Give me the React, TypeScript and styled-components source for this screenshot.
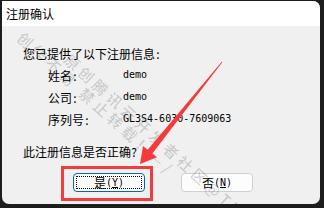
import React from "react";
import styled, { createGlobalStyle } from "styled-components";

const GlobalStyle = createGlobalStyle`
  html, body {
    margin: 0;
    padding: 0;
    background: #1d1d1d;
  }
  body {
    font-family: "Noto Sans CJK SC", "Noto Sans", sans-serif;
    color: #000;
  }
`;

const Page = styled.div`
  width: 324px;
  height: 208px;
  box-sizing: border-box;
  padding: 1px 4px 4px 2px;
  overflow: hidden;
`;

const Window = styled.div`
  position: relative;
  width: 318px;
  height: 203px;
  background: #f0f0f0;
  border-radius: 0 7px 7px 7px;
  overflow: hidden;
  display: flex;
  flex-direction: column;
`;

const TitleBar = styled.div`
  height: 25px;
  flex: none;
  background: #ffffff;
  display: flex;
  align-items: center;
  padding-left: 4px;
  font-size: 12px;
  line-height: 16px;
`;

const Body = styled.div`
  flex: 1;
  display: flex;
  flex-direction: column;
  padding: 20px 0 0 21px;
  font-size: 12px;
`;

const Line = styled.div<{ $top?: number }>`
  height: 16px;
  line-height: 16px;
  margin-top: ${(p) => p.$top ?? 0}px;
  white-space: nowrap;
`;

const Colon = styled.span`
  display: inline-block;
  width: 6px;
  text-align: center;
`;

const InfoGrid = styled.div`
  display: grid;
  grid-template-columns: 75px auto;
  grid-auto-rows: 22px;
  align-items: center;
  margin-top: 3px;
  padding-left: 25px;
`;

const Label = styled.div`
  line-height: 16px;
  white-space: nowrap;
`;

const Value = styled.div`
  font-family: "DejaVu Sans Mono", monospace;
  font-size: 10px;
  line-height: 16px;
  white-space: nowrap;
  margin-top: -2px;
`;

const ButtonRow = styled.div`
  display: flex;
  gap: 36px;
  margin-top: 13px;
  padding-left: 50px;
`;

const Button = styled.button<{ $focused?: boolean }>`
  position: relative;
  width: 72px;
  height: 19px;
  box-sizing: border-box;
  padding: 0;
  margin: 0;
  background: #fdfdfd;
  border: 1px solid ${(p) => (p.$focused ? "#0067c0" : "#d0d0d0")};
  border-radius: 4px;
  font-family: "Noto Sans CJK SC", sans-serif;
  font-size: 12px;
  line-height: 15px;
  color: #000;
  display: flex;
  align-items: center;
  justify-content: center;
`;

const FocusRing = styled.span`
  position: absolute;
  inset: 2px;
  border: 1px dotted #000;
  border-radius: 1px;
  pointer-events: none;
`;

const Accel = styled.span`
  font-family: "DejaVu Sans Mono", monospace;
  font-size: 10px;
`;

const Underlined = styled.span`
  text-decoration: underline;
  text-underline-offset: 1px;
`;

const Watermark = styled.div`
  position: absolute;
  inset: 0;
  pointer-events: none;
  overflow: hidden;
`;

const WatermarkLine = styled.span<{ $x: number; $y: number }>`
  position: absolute;
  left: ${(p) => p.$x}px;
  top: ${(p) => p.$y}px;
  transform-origin: 0 0;
  transform: rotate(42deg);
  font-size: 15px;
  font-weight: 500;
  line-height: 15px;
  letter-spacing: 4px;
  color: rgba(0, 0, 0, 0.17);
  white-space: nowrap;
  font-family: "Noto Sans CJK SC", sans-serif;
`;

const Highlight = styled.div`
  position: absolute;
  left: 59px;
  top: 165px;
  width: 92px;
  height: 35px;
  box-sizing: border-box;
  border: 3px solid #f23c3c;
  pointer-events: none;
`;

const ArrowLayer = styled.svg`
  position: absolute;
  left: 0;
  top: 0;
  pointer-events: none;
`;

function arrowPoints(): string {
  const T = [220, 61];
  const P = [138, 163];
  const dx = P[0] - T[0];
  const dy = P[1] - T[1];
  const len = Math.hypot(dx, dy);
  const d = [dx / len, dy / len];
  const n = [d[1], -d[0]];
  const B = [P[0] - 16 * d[0], P[1] - 16 * d[1]];
  const pt = (b: number[], k: number) =>
    `${(b[0] + k * n[0]).toFixed(1)},${(b[1] + k * n[1]).toFixed(1)}`;
  const tail1 = `${(T[0] + 0.4 * n[0]).toFixed(1)},${(T[1] + 0.4 * n[1]).toFixed(1)}`;
  const tail2 = `${(T[0] - 0.4 * n[0]).toFixed(1)},${(T[1] - 0.4 * n[1]).toFixed(1)}`;
  return [tail1, pt(B, 3), pt(B, 9), `${P[0]},${P[1]}`, pt(B, -9), pt(B, -3), tail2].join(" ");
}

export default function App() {
  return (
    <>
      <GlobalStyle />
      <Page>
        <Window>
          <TitleBar>注册确认</TitleBar>
          <Body>
            <Line>
              您已提供了以下注册信息<Colon>:</Colon>
            </Line>
            <InfoGrid>
              <Label>
                姓名<Colon>:</Colon>
              </Label>
              <Value>demo</Value>
              <Label>
                公司<Colon>:</Colon>
              </Label>
              <Value>demo</Value>
              <Label>
                序列号<Colon>:</Colon>
              </Label>
              <Value>GL3S4-6030-7609063</Value>
            </InfoGrid>
            <Line $top={13}>
              此注册信息是否正确<Colon>?</Colon>
            </Line>
            <ButtonRow>
              <Button $focused>
                是<Accel>(<Underlined>Y</Underlined>)</Accel>
                <FocusRing />
              </Button>
              <Button>
                否<Accel>(<Underlined>N</Underlined>)</Accel>
              </Button>
            </ButtonRow>
          </Body>
          <Watermark>
            <WatermarkLine $x={70} $y={50}>原创腾讯云开发者社区@TT</WatermarkLine>
            <WatermarkLine $x={23} $y={28}>创作不易 禁止转载！—/</WatermarkLine>
          </Watermark>
          <Highlight />
          <ArrowLayer width="318" height="203" viewBox="0 0 318 203">
            <polygon points={arrowPoints()} fill="#f43a3a" />
          </ArrowLayer>
        </Window>
      </Page>
    </>
  );
}
